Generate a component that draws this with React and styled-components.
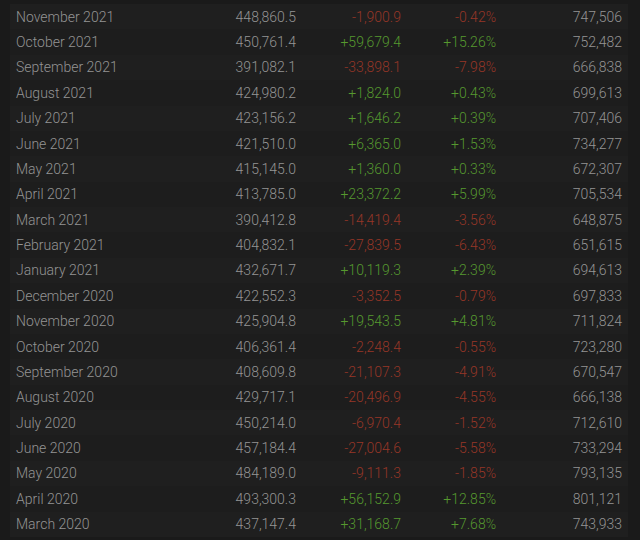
import React from "react";
import styled, { createGlobalStyle } from "styled-components";

const Global = createGlobalStyle`
  html, body { margin: 0; padding: 0; background: #1a1a1a; }
  body { font-family: Roboto, "Noto Sans", "Liberation Sans", sans-serif; }
`;

const Page = styled.div`
  padding: 4px 12px 0 10px;
`;

const Table = styled.div`
  display: flex;
  flex-direction: column;
  background: #1e1e1e;
`;

const Row = styled.div`
  display: grid;
  grid-template-columns: 174px 106px 105px 95px 126px;
  align-items: center;
  height: 25.38px;
  padding: 0 6px;
  background: ${(p) => (p.$odd ? "#1d1d1d" : "#1f1f1f")};
  font-size: 14px;
  font-weight: 300;
  color: #949494;
`;

const Month = styled.div`
  text-align: left;
  white-space: nowrap;
`;

const Num = styled.div`
  text-align: right;
  white-space: nowrap;
  color: ${(p) => (p.$tone === "up" ? "#56992f" : p.$tone === "down" ? "#963627" : "#949494")};
`;

const data = [
  ["November 2021", "448,860.5", "-1,900.9", "-0.42%", "747,506"],
  ["October 2021", "450,761.4", "+59,679.4", "+15.26%", "752,482"],
  ["September 2021", "391,082.1", "-33,898.1", "-7.98%", "666,838"],
  ["August 2021", "424,980.2", "+1,824.0", "+0.43%", "699,613"],
  ["July 2021", "423,156.2", "+1,646.2", "+0.39%", "707,406"],
  ["June 2021", "421,510.0", "+6,365.0", "+1.53%", "734,277"],
  ["May 2021", "415,145.0", "+1,360.0", "+0.33%", "672,307"],
  ["April 2021", "413,785.0", "+23,372.2", "+5.99%", "705,534"],
  ["March 2021", "390,412.8", "-14,419.4", "-3.56%", "648,875"],
  ["February 2021", "404,832.1", "-27,839.5", "-6.43%", "651,615"],
  ["January 2021", "432,671.7", "+10,119.3", "+2.39%", "694,613"],
  ["December 2020", "422,552.3", "-3,352.5", "-0.79%", "697,833"],
  ["November 2020", "425,904.8", "+19,543.5", "+4.81%", "711,824"],
  ["October 2020", "406,361.4", "-2,248.4", "-0.55%", "723,280"],
  ["September 2020", "408,609.8", "-21,107.3", "-4.91%", "670,547"],
  ["August 2020", "429,717.1", "-20,496.9", "-4.55%", "666,138"],
  ["July 2020", "450,214.0", "-6,970.4", "-1.52%", "712,610"],
  ["June 2020", "457,184.4", "-27,004.6", "-5.58%", "733,294"],
  ["May 2020", "484,189.0", "-9,111.3", "-1.85%", "793,135"],
  ["April 2020", "493,300.3", "+56,152.9", "+12.85%", "801,121"],
  ["March 2020", "437,147.4", "+31,168.7", "+7.68%", "743,933"],
];

export default function App() {
  return (
    <>
      <Global />
      <Page>
        <Table>
          {data.map(([m, avg, gain, pct, peak], i) => {
            const tone = gain.startsWith("+") ? "up" : "down";
            return (
              <Row key={m} $odd={i % 2 === 1}>
                <Month>{m}</Month>
                <Num>{avg}</Num>
                <Num $tone={tone}>{gain}</Num>
                <Num $tone={tone}>{pct}</Num>
                <Num>{peak}</Num>
              </Row>
            );
          })}
        </Table>
      </Page>
    </>
  );
}
